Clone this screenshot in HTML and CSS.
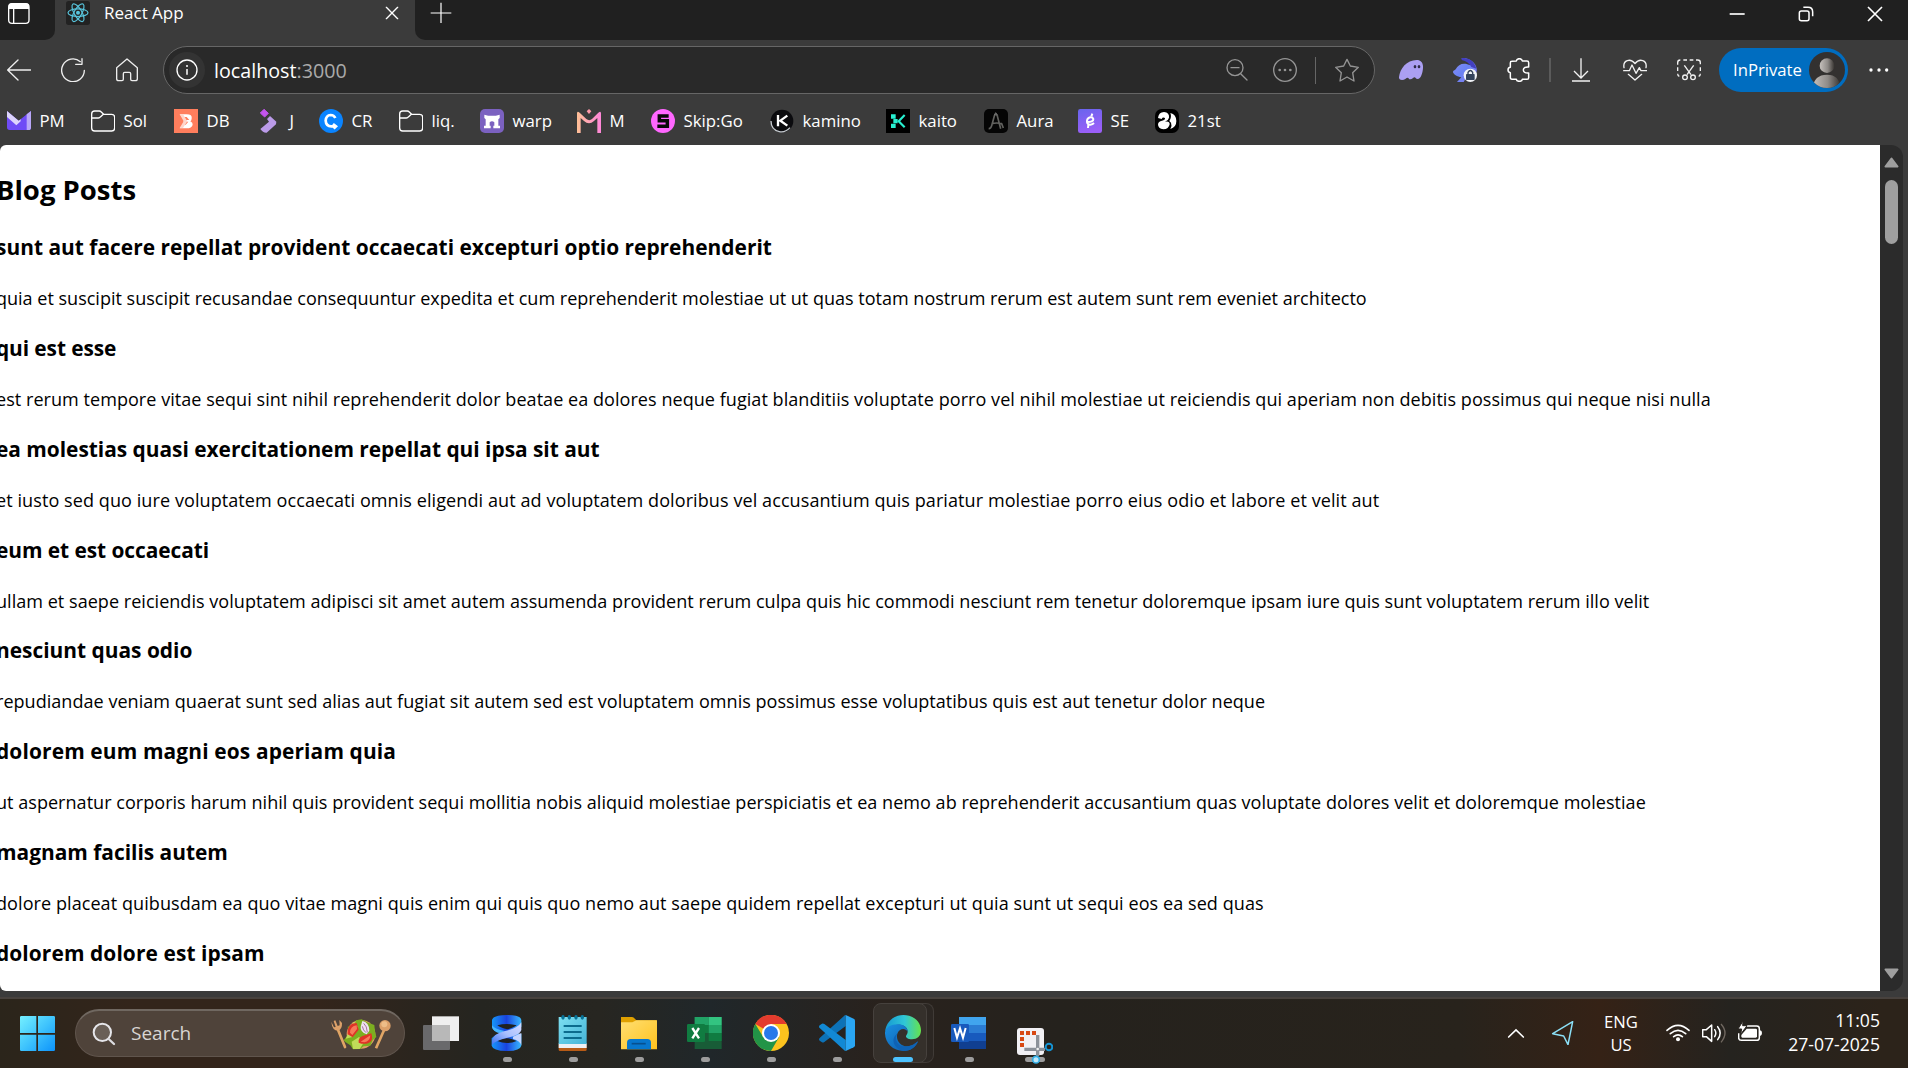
FILE: index.html
```
<!DOCTYPE html>
<html lang="en">
<head>
<meta charset="utf-8">
<title>React App</title>
<link rel="stylesheet" href="styles.css">
</head>
<body>
<header class="titlebar">
  <div class="tab-actions">
    <svg class="ic" viewBox="21 3 72 72"><rect x="26" y="11" width="61" height="59" rx="10" fill="none" stroke="#fff" stroke-width="4"/><path d="M26 27V20q0-10 10-10h41q10 0 10 10v7z" fill="#fff"/><path d="M41 27v43" stroke="#fff" stroke-width="4"/></svg>
  </div>
  <div class="tab">
    <svg class="ic" viewBox="198 3 72 72"><rect x="198" y="3" width="72" height="72" rx="8" fill="#222"/><g fill="none" stroke="#58c4dc" stroke-width="3.6"><ellipse cx="234" cy="38" rx="30" ry="11.500"/><ellipse cx="234" cy="38" rx="30" ry="11.500" transform="rotate(60 234 38)"/><ellipse cx="234" cy="38" rx="30" ry="11.500" transform="rotate(120 234 38)"/></g><circle cx="234" cy="38" r="6" fill="#58c4dc"/></svg>
    <span class="tab-title">React App</span>
    <svg class="ic" viewBox="1139 5 72 72"><path d="M1158 24l34 34M1192 24l-34 34" stroke="#fff" stroke-width="4" stroke-linecap="round"/></svg>
  </div>
  <div class="tab-rest">
    <svg class="ic new-tab" viewBox="1288 2 72 72"><path d="M1324 7v61M1293 38h62" stroke="#fff" stroke-width="3.600"/></svg>
    <svg class="ic win" viewBox="553 6 72 72"><path d="M567 42h45" stroke="#fff" stroke-width="5"/></svg>
    <svg class="ic win" viewBox="760 8 72 72"><rect x="776" y="35" width="29" height="29" rx="6" fill="none" stroke="#fff" stroke-width="4.500"/><path d="M788 24h14q14 0 14 14v13" fill="none" stroke="#fff" stroke-width="4.500"/></svg>
    <svg class="ic win" viewBox="967 8 72 72"><path d="M982 23l42 42M1024 23l-42 42" stroke="#fff" stroke-width="5"/></svg>
  </div>
</header>

<nav class="toolbar">
  <div class="cell cell-back"><svg class="ic" viewBox="21 172 72 72"><path d="M92 208H24M54 178L23 208l31 30" fill="none" stroke="#eee" stroke-width="4" stroke-linecap="round" stroke-linejoin="round"/></svg></div>
  <div class="cell"><svg class="ic" viewBox="183 173 72 72"><path d="M253 210a34 34 0 1 1-12-26M246 175v17h-19" fill="none" stroke="#eee" stroke-width="4" stroke-linecap="round" stroke-linejoin="round"/></svg></div>
  <div class="cell"><svg class="ic" viewBox="345 173 72 72"><path d="M350 202l31-26 31 26v33q0 6-6 6h-10q-4 0-4-4v-17q0-4-4-4h-14q-4 0-4 4v17q0 4-4 4h-10q-6 0-6-6z" fill="none" stroke="#eee" stroke-width="4" stroke-linejoin="round"/></svg></div>
  <div class="address">
    <span class="info"><svg class="ic" viewBox="525 174 72 72"><circle cx="561" cy="210" r="30" fill="none" stroke="#fff" stroke-width="4"/><path d="M561 207v17" stroke="#fff" stroke-width="4.500"/><circle cx="561" cy="198" r="3" fill="#fff"/></svg></span>
    <span class="url">localhost<span class="port">:3000</span></span>
    <svg class="ic a-zoom" viewBox="75 174 72 72"><g fill="none" stroke="#959595" stroke-width="4"><circle cx="105" cy="203" r="24"/><path d="M122 221l19 19M93 203h24" stroke-linecap="round"/></g></svg>
    <svg class="ic a-more" viewBox="219 174 72 72"><circle cx="255" cy="210" r="34" fill="none" stroke="#959595" stroke-width="4"/><g fill="#959595"><circle cx="239" cy="210" r="4"/><circle cx="255" cy="210" r="4"/><circle cx="271" cy="210" r="4"/></g></svg>
    <i class="divider a-div"></i>
    <svg class="ic a-star" viewBox="405 174 72 72"><path d="M441 178l10 20 24 4-17 16 4 25-21-12-21 12 4-25-17-16 24-4z" fill="none" stroke="#959595" stroke-width="4" stroke-linejoin="round"/></svg>
  </div>
  <div class="cell cell-ext"><svg class="ic" viewBox="597 174 72 72"><path d="M597 231C600 206 620 180 650 180c14 0 20 10 19 24-1 16-7 33-16 33-6 0-7-5-9-5-4 0-7 6-13 6-5 0-5-5-8-5-4 0-9 7-17 7-6 0-10-3-9-9z" fill="#ab9ff2"/><ellipse cx="645" cy="200" rx="4" ry="5" fill="#302c48"/><ellipse cx="657" cy="200" rx="4" ry="5" fill="#302c48"/></svg></div>
  <div class="cell"><svg class="ic" viewBox="759 174 72 72"><defs><linearGradient id="bunny" x1="0" y1="0" x2="1" y2="1"><stop offset="0" stop-color="#8a8ff0"/><stop offset=".5" stop-color="#6a82f5"/><stop offset="1" stop-color="#8b80ec"/></linearGradient></defs><path d="M785 174c22-1 42 13 45 32 2 16-8 26-22 28-9 1-13 4-17 12h-20l13-14c-12-2-25-10-25-16 0-4 5-5 8-8 8-17 26-21 44-12-3-11-13-15-25-18z" fill="url(#bunny)"/><path d="M785 174c22-2 40 12 44 32l-15-5c-6-12-15-17-29-21z" fill="#433fc0"/><circle cx="811" cy="226" r="20" fill="#f1f3f7"/><rect x="798" y="222" width="26" height="18" rx="2" fill="#34435b"/><path d="M804 222v-5q7-11 14 0v5" fill="none" stroke="#34435b" stroke-width="4"/></svg></div>
  <div class="cell cell-puzzle"><svg class="ic" viewBox="924 174 72 72"><path d="M938 184q-4 0-4 5v13q-7 1-7 8t7 8v14q0 6 5 6h13q1 6 9 6t9-6h14q5 0 5-5v-14q-16 1-16-9t16-9v-13q0-5-5-5h-14q-1-7-9-7t-9 7z" fill="none" stroke="#fff" stroke-width="4.500" stroke-linejoin="round"/></svg></div>
  <i class="divider"></i>
  <div class="cell cell-dl"><svg class="ic" viewBox="87 174 72 72"><path d="M123 175v58M102 213l21 21 21-21M96 243h54" fill="none" stroke="#f2f2f2" stroke-width="4"/></svg></div>
  <div class="cell"><svg class="ic" viewBox="249 174 72 72"><path d="M252 203c-4-22 19-30 33-12 14-18 37-10 33 12M251 212h17l8-17 12 25 10-17 5 9h17M265 223l20 17 20-17" fill="none" stroke="#f2f2f2" stroke-width="4" stroke-linecap="round" stroke-linejoin="round"/></svg></div>
  <div class="cell"><svg class="ic" viewBox="411 174 72 72"><path d="M418 229q-5-2-5-8M413 213v-11M413 194v-6q0-8 8-8M430 180h11M449 180h11M468 180h5q8 0 8 8v5M481 202v11M481 221q0 6-5 8" fill="none" stroke="#f2f2f2" stroke-width="4"/><path d="M433 196l20 28M461 196l-20 28" stroke="#f2f2f2" stroke-width="4"/><g fill="none" stroke="#f2f2f2" stroke-width="4"><circle cx="435" cy="232" r="7"/><circle cx="459" cy="232" r="7"/></g></svg></div>
  <div class="profile"><span>InPrivate</span>
    <svg class="avatar" viewBox="807 156 108 108"><defs><linearGradient id="person"><stop offset="0" stop-color="#c5c0bc"/><stop offset=".55" stop-color="#8f8b88"/><stop offset="1" stop-color="#383532"/></linearGradient><clipPath id="disc"><circle cx="861" cy="210" r="54"/></clipPath></defs><g clip-path="url(#disc)"><path d="M807 156h108v108H807z" fill="#333130"/><circle cx="861" cy="197" r="22" fill="url(#person)"/><path d="M818 264q4-40 43-40 38 0 40 40z" fill="url(#person)"/></g></svg>
  </div>
  <div class="cell cell-menu"><svg class="ic" viewBox="983 176 72 72"><g fill="#fff"><circle cx="995" cy="212" r="5"/><circle cx="1019" cy="212" r="5"/><circle cx="1042" cy="212" r="5"/></g></svg></div>
</nav>

<nav class="bookmarks">
  <div class="bm"><svg class="ic" viewBox="21 327 72 72"><path d="M21 333l35 29 37-29v50q0 7-8 7H29q-8 0-8-8z" fill="#6f4bf6"/><path d="M21 333l35 29 6-4v6l-13 12-28-25z" fill="#ddd4fc"/><path d="M80 343l13-10v50q0 7-8 7h-5z" fill="#b9a7f8"/></svg>PM</div>
  <div class="bm"><svg class="ic" viewBox="273 327 72 72"><path d="M275 384v-42q0-9 9-9h14q3 0 5 2l8 8h24q9 0 9 9v32q0 9-9 9h-51q-9 0-9-9zM275 354h20q4 0 7-4l8-7" fill="none" stroke="#fff" stroke-width="4"/></svg>Sol</div>
  <div class="bm"><svg class="ic" viewBox="522 327 72 72"><path d="M522 327h72v72h-72z" fill="#ff7e5d"/><path d="M539 343h20q19 0 16 13-1 6-4 8 8 4 7 10-2 11-19 11h-20l10-11h8l8-9h-15l3-5h15l-8-9h-13z" fill="#fff"/><path d="M539 343h10l13 21-13 20h-10l12-20z" fill="#ffd5ca"/></svg>DB</div>
  <div class="bm"><svg class="ic" viewBox="770 327 72 72"><path d="M791 328l13 12-11 11-13-12z" fill="#c554f0" stroke="#c554f0" stroke-width="3" stroke-linejoin="round"/><path d="M800 357l9-9 19 17-1 8-28 25q-11 1-19-11l26-22z" fill="#bb9be9"/></svg>J</div>
  <div class="bm"><svg class="ic" viewBox="957 327 72 72"><circle cx="993" cy="363" r="36" fill="#0a84ff"/><path d="M1006 354q-4-9-14-9-14 1-15 17 1 17 17 17h13M999 372l9 7-7 7" fill="none" stroke="#fff" stroke-width="8"/></svg>CR</div>
  <div class="bm"><svg class="ic" viewBox="273 327 72 72"><path d="M275 384v-42q0-9 9-9h14q3 0 5 2l8 8h24q9 0 9 9v32q0 9-9 9h-51q-9 0-9-9zM275 354h20q4 0 7-4l8-7" fill="none" stroke="#fff" stroke-width="4"/></svg>liq.</div>
  <div class="bm"><svg class="ic" viewBox="240 57 72 72"><rect x="240" y="57" width="72" height="72" rx="15" fill="#7b61c0"/><path d="M253 74q23 7 46 0v10l-4 4v19h5v8h-20v-8h3V97q-7-6-14 0v10h3v8h-20v-8h5V88l-4-4z" fill="#fff"/></svg>warp</div>
  <div class="bm"><svg class="ic" viewBox="531 57 72 72"><defs><linearGradient id="em"><stop offset="0" stop-color="#ffc095"/><stop offset="1" stop-color="#ff86da"/></linearGradient></defs><path d="M531 129V70q0-8 8-2l20 19q9 7 17 0l19-19q8-6 8 2v59h-11V84l-10 9q-15 14-30 0l-10-9v45z" fill="url(#em)"/><path d="M567 57l7 7-7 8-7-8z" fill="#ff9aa9"/></svg>M</div>
  <div class="bm"><svg class="ic" viewBox="753 57 72 72"><circle cx="789" cy="93" r="36" fill="#ff67ff"/><path d="M806 78h-28v14h24v17h-30" fill="none" stroke="#090909" stroke-width="10.500"/></svg>Skip:Go</div>
  <div class="bm"><svg class="ic" viewBox="1108 57 72 72"><circle cx="1144" cy="93" r="34" fill="#0b0b0e"/><path d="M1111 93q0 26 25 32 17 4 32-12" fill="none" stroke="#c6cbd0" stroke-width="4"/><path d="M1132 75v34M1160 77l-21 15 21 15" fill="none" stroke="#fff" stroke-width="7"/></svg>kamino</div>
  <div class="bm"><svg class="ic" viewBox="138 57 72 72"><path d="M138 57h72v72h-72z" fill="#000"/><path d="M153 73h14v13h-14zM153 101h14v13h-14zM160 87h13v13h-13z" fill="#27efd0"/><path d="M194 75l-18 18.500 18 18.500" fill="none" stroke="#27efd0" stroke-width="6.500"/></svg>kaito</div>
  <div class="bm"><svg class="ic" viewBox="432 57 72 72"><rect x="432" y="57" width="72" height="72" rx="15" fill="#050505"/><path d="M446 116q7 0 9-9l8-29q4-10 9 0l10 38M456 101q13-4 29 0l5 13" fill="none" stroke="#62625f" stroke-width="5"/><path d="M463 76l4-8 6 8" stroke="#777" stroke-width="3" fill="none"/></svg>Aura</div>
  <div class="bm"><svg class="ic" viewBox="714 57 72 72"><defs><linearGradient id="se" x2=".3" y2="1"><stop offset="0" stop-color="#6865ed"/><stop offset="1" stop-color="#9a5ff8"/></linearGradient></defs><rect x="714" y="57" width="72" height="72" rx="7" fill="url(#se)"/><path d="M739 96q22 1 21-9-2-6-9-5-11 3-10 14 2 9 10 8 7-1 11-5" fill="none" stroke="#fff" stroke-width="6"/><path d="M754 79l3-8M745 105l-1 9" stroke="#fff" stroke-width="6"/></svg>SE</div>
  <div class="bm"><svg class="ic" viewBox="945 57 72 72"><rect x="945" y="57" width="72" height="72" rx="20" fill="#000"/><path d="M954 84q2-18 18-18 17 2 15 17-2 9-12 12 14-3 14 8-3 15-19 15-16-1-16-15 1-9 12-11 10-2 9-8-7-4-10 3z" fill="#fff"/><path d="M991 69q18 5 18 24t-18 24q6-10 2-19l-5-5q8-12 3-24z" fill="#fff"/></svg>21st</div>
</nav>

<div class="viewport">
  <main class="page">
    <h1>Blog Posts</h1>
    <h3>sunt aut facere repellat provident occaecati excepturi optio reprehenderit</h3>
    <p>quia et suscipit suscipit recusandae consequuntur expedita et cum reprehenderit molestiae ut ut quas totam nostrum rerum est autem sunt rem eveniet architecto</p>
    <h3>qui est esse</h3>
    <p>est rerum tempore vitae sequi sint nihil reprehenderit dolor beatae ea dolores neque fugiat blanditiis voluptate porro vel nihil molestiae ut reiciendis qui aperiam non debitis possimus qui neque nisi nulla</p>
    <h3>ea molestias quasi exercitationem repellat qui ipsa sit aut</h3>
    <p>et iusto sed quo iure voluptatem occaecati omnis eligendi aut ad voluptatem doloribus vel accusantium quis pariatur molestiae porro eius odio et labore et velit aut</p>
    <h3>eum et est occaecati</h3>
    <p>ullam et saepe reiciendis voluptatem adipisci sit amet autem assumenda provident rerum culpa quis hic commodi nesciunt rem tenetur doloremque ipsam iure quis sunt voluptatem rerum illo velit</p>
    <h3>nesciunt quas odio</h3>
    <p>repudiandae veniam quaerat sunt sed alias aut fugiat sit autem sed est voluptatem omnis possimus esse voluptatibus quis est aut tenetur dolor neque</p>
    <h3>dolorem eum magni eos aperiam quia</h3>
    <p>ut aspernatur corporis harum nihil quis provident sequi mollitia nobis aliquid molestiae perspiciatis et ea nemo ab reprehenderit accusantium quas voluptate dolores velit et doloremque molestiae</p>
    <h3>magnam facilis autem</h3>
    <p>dolore placeat quibusdam ea quo vitae magni quis enim qui quis quo nemo aut saepe quidem repellat excepturi ut quia sunt ut sequi eos ea sed quas</p>
    <h3>dolorem dolore est ipsam</h3>
  </main>
  <div class="scrollbar">
    <svg class="arrow" viewBox="0 0 15 11"><path d="M7.500 1.500L13.500 9.500h-12z" fill="#9f9f9f" stroke="#9f9f9f" stroke-width="2" stroke-linejoin="round"/></svg>
    <i class="thumb"></i>
    <svg class="arrow arrow-down" viewBox="0 0 15 11"><path d="M7.500 9.500L13.500 1.500h-12z" fill="#9f9f9f" stroke="#9f9f9f" stroke-width="2" stroke-linejoin="round"/></svg>
  </div>
</div>

<footer class="taskbar">
  <svg class="start" viewBox="60 108 105 105"><defs><linearGradient id="win" gradientUnits="userSpaceOnUse" x1="60" y1="108" x2="165" y2="213"><stop offset="0" stop-color="#75f0ff"/><stop offset=".5" stop-color="#3fc4fd"/><stop offset="1" stop-color="#0d93fb"/></linearGradient></defs><path d="M64 108h45v51H60v-47q0-4 4-4zM114 108h47q4 0 4 4v47h-51zM60 164h49v49H64q-4 0-4-4zM114 164h51v45q0 4-4 4h-47z" fill="url(#win)"/></svg>
  <div class="search">
    <svg class="mag" viewBox="276 123 72 72"><circle cx="307" cy="154" r="26" fill="#fff" fill-opacity=".15" stroke="#e6e6ea" stroke-width="6"/><path d="M326 174l16 15" stroke="#dcdce0" stroke-width="7" stroke-linecap="round"/></svg>
    <span>Search</span>
    <svg class="salad" viewBox="993 113 186 96"><path d="M1016 146l22 54" stroke="#e0a565" stroke-width="8" stroke-linecap="round"/><path d="M997 124q2 27 21 27 12-6 11-23l-8-9 1 16-6 2-7-17-5 2 6 18-5 1z" fill="#dca069"/><path d="M1155 150l-24 54" stroke="#e0a565" stroke-width="8"/><ellipse cx="1158" cy="136" rx="17" ry="17" fill="#dca069"/><circle cx="1156" cy="132" r="9" fill="#edbd88"/><circle cx="1086" cy="162" r="43" fill="#e4a066"/><path d="M1034 180l16-20-4-21 20-4 5-15 17-3 16 9 22 8 2 20 4 16-11 10-7 16-20 2-10 8-22 1-8-12-14-9z" fill="#7cae20"/><path d="M1064 124l14 16-18 30-20 5zM1058 184l22-14 16 14-14 22h-20z" fill="#c0dc59"/><path d="M1046 162q-2-33 27-34l6 20-18 23zM1079 187q-2-15 12-20l26-8q8 23-10 30-14 4-28-2z" fill="#df3327"/><path d="M1053 157q1-20 20-22l1 11-14 18zM1085 184l29-19q-1 18-18 21z" fill="#f77a5a"/><path d="M1090 122q20 3 21 29l-8 11q-20-7-18-23z" fill="#efe3f0"/><path d="M1094 129q10 8 11 27M1090 138q2 12 11 19" stroke="#aa709f" stroke-width="3" fill="none"/></svg>
  </div>
  <svg class="taskview" viewBox="1269 108 108 102"><path d="M1296 109h81v74h-81z" fill="#efefef"/><rect x="1269" y="135" width="81" height="75" rx="3" fill="#69696b"/><path d="M1296 135h54v48h-54z" fill="#b8b8b8"/></svg>
  <div class="apps">
    <div class="app"><svg viewBox="88 105 108 108"><defs><linearGradient id="az"><stop offset="0" stop-color="#1698fa"/><stop offset=".5" stop-color="#1a43dd"/><stop offset="1" stop-color="#39baff"/></linearGradient><linearGradient id="bz" x1="0" y1="1" x2="1" y2="0"><stop offset="0" stop-color="#3c72f2"/><stop offset=".5" stop-color="#a9c0ff"/><stop offset="1" stop-color="#d6dcff"/></linearGradient></defs><path d="M97 120q4-15 45-15t43 15v20q-8 14-22 19l22 3v35q-4 16-44 16-42-1-45-16v-22q10-12 26-17-22-4-25-18z" fill="url(#az)"/><path d="M113 136q29-8 58 0-8 7-28 12-20-4-30-12zM113 183q24-17 58 0-29 12-58 0z" fill="#20211f"/><path d="M97 136q10 13 37 17l-12 7q-22-4-25-18z" fill="#45b5ff"/><path d="M97 181q3-18 36-27 42-9 52-27v23q-4 16-36 22-44 9-52 24z" fill="url(#bz)"/><path d="M160 170l25-11v37q-4-14-25-19z" fill="#c5d4ff"/></svg><i></i></div>
    <div class="app"><svg viewBox="286 105 108 108"><defs><linearGradient id="np" x2="1" y2="1"><stop offset="0" stop-color="#7ddff0"/><stop offset="1" stop-color="#45b4d8"/></linearGradient></defs><rect x="297" y="190" width="84" height="23" rx="4" fill="#b75b16"/><path d="M297 190h84v14h-84z" fill="#edf0f5"/><path d="M297 111h84v81h-84z" fill="url(#np)"/><path d="M312 138h54M312 156h54M312 174h54" stroke="#0b6b8d" stroke-width="6"/><g fill="#087398"><ellipse cx="310" cy="112" rx="5" ry="7"/><ellipse cx="329" cy="112" rx="5" ry="7"/><ellipse cx="349" cy="112" rx="5" ry="7"/><ellipse cx="368" cy="112" rx="5" ry="7"/></g></svg><i></i></div>
    <div class="app"><svg viewBox="484 105 108 108"><defs><linearGradient id="fo" x2="1" y2="1"><stop offset="0" stop-color="#ffdf72"/><stop offset="1" stop-color="#ffc21d"/></linearGradient></defs><path d="M484 111h32q5 0 8 4l6 6h58q4 0 4 5v30H484z" fill="#dfa000"/><path d="M484 127h34l12-6h62v87H484z" fill="url(#fo)"/><path d="M502 208v-20q0-11 11-11h50q11 0 11 11v20z" fill="#0877cd"/><path d="M516 191h42" stroke="#07508f" stroke-width="5"/></svg><i></i></div>
    <div class="app"><svg viewBox="682 105 108 108"><path d="M705 111h81v96h-81z" fill="#185c37"/><path d="M705 111h42v24h-42z" fill="#21a366"/><path d="M747 111h39v24h-39z" fill="#33c481"/><path d="M705 135h42v24h-42z" fill="#107c41"/><path d="M747 135h39v24h-39z" fill="#21a366"/><path d="M747 159h39v24h-39z" fill="#107c41"/><rect x="682" y="132" width="54" height="54" rx="4" fill="#107c41"/><path d="M698 144l20 31M718 144l-20 31" stroke="#fff" stroke-width="7"/></svg><i></i></div>
    <div class="app"><svg viewBox="0 0 108 108"><circle cx="54" cy="54" r="54" fill="#fcc31e"/><path d="M54 54L7 27A54 54 0 0 1 101 27H54z" fill="#e33b2e"/><path d="M7 27A54 54 0 0 0 54 108L78 67 54 54 31 67z" fill="#229447"/><circle cx="54" cy="54" r="27" fill="#fff"/><circle cx="54" cy="54" r="21" fill="#2879ea"/></svg><i></i></div>
    <div class="app"><svg viewBox="177 105 108 108"><path d="M179 174q-4 4 0 8l7 5q3 2 7-1l64-48v-33q-3 0-5 3z" fill="#0d72b7"/><path d="M179 144q-4-4 0-8l7-5q3-2 7 1l64 48v33q-3 0-5-3z" fill="#1289d4"/><path d="M257 105l24 11q4 2 4 6v74q0 4-4 6l-24 11z" fill="#2aa6f3"/></svg><i></i></div>
    <div class="app app-active"><svg viewBox="375 105 108 108"><defs><linearGradient id="e1"><stop offset="0" stop-color="#1698d3"/><stop offset=".55" stop-color="#30c7d6"/><stop offset="1" stop-color="#66e34b"/></linearGradient><linearGradient id="e2" x2="1" y2="1"><stop offset="0" stop-color="#198fe0"/><stop offset="1" stop-color="#0c57a8"/></linearGradient></defs><path d="M375 156C378 126 401 105 430 105c31 0 53 21 53 46 0 18-12 27-27 27-14 0-19-6-18-10 2-4 5-6 5-14 0-12-12-20-29-20-18 0-34 10-39 22z" fill="url(#e1)"/><path d="M375 157c3-16 18-24 38-24 17 0 29 8 30 22-8-14-27-8-31 6-6 22 12 39 30 38 15 0 24-9 32-15-7 18-22 29-43 29-34 0-57-25-56-56z" fill="url(#e2)"/><path d="M412 160c-12 24 6 44 30 39 15-1 24-9 32-15-7 18-22 29-43 29-24-5-44-31-19-53z" fill="#0e62b5"/></svg><i></i></div>
    <div class="app"><svg viewBox="573 105 108 108"><path d="M597 111h81v96h-81z" fill="#103f91"/><path d="M597 111h81v24h-81z" fill="#41a5ee"/><path d="M597 135h81v24h-81z" fill="#2b7cd3"/><path d="M597 159h81v24h-81z" fill="#185abd"/><rect x="573" y="132" width="54" height="54" rx="4" fill="#185abd"/><path d="M583 144l8 29 9-28 9 28 8-29" fill="none" stroke="#fff" stroke-width="6"/></svg><i></i></div>
    <div class="app app-snip"><i></i><svg viewBox="771 141 108 111"><rect x="771" y="144" width="81" height="81" rx="9" fill="#f1f0f4"/><path d="M780 153h12v12h-12zM798 153h12v12h-12zM816 153h12v12h-12zM780 171h12v12h-12zM780 189h12v12h-12z" fill="#d84813"/><path d="M833 165v64M793 208h62" stroke="#8c9199" stroke-width="10"/><circle cx="833" cy="207" r="4" fill="#eee"/><circle cx="867" cy="201" r="10" fill="none" stroke="#1593d3" stroke-width="6"/><circle cx="828" cy="239" r="10" fill="#bde7fa" stroke="#33aee5" stroke-width="5"/></svg></div>
  </div>
  <div class="tray">
    <svg class="ic chev" viewBox="132 242 72 72"><path d="M146 290l22-21 22 21" fill="none" stroke="#fff" stroke-width="5" stroke-linecap="round"/></svg>
    <svg class="ic loc" viewBox="273 243 72 72"><path d="M338 245l-60 36 33 7 13 26z" fill="none" stroke="#8ce0f7" stroke-width="4.500" stroke-linejoin="round"/></svg>
    <div class="lang">ENG<br>US</div>
    <svg class="ic wifi" viewBox="618 242 72 72"><g fill="none" stroke="#fff" stroke-width="5" stroke-linecap="round"><path d="M621 270q33-30 66 0M631 280q23-20 46 0M641 289q13-11 26 0"/></g><circle cx="654" cy="297" r="6" fill="#fff"/></svg>
    <svg class="ic vol" viewBox="726 243 72 72"><path d="M728 269v21h11l16 14v-49l-16 14z" fill="none" stroke="#fff" stroke-width="4.500" stroke-linejoin="round"/><path d="M764 269q7 10 0 21M773 260q15 19 0 39" fill="none" stroke="#fff" stroke-width="4.500" stroke-linecap="round"/><path d="M783 252q24 27 0 55" fill="none" stroke="#716961" stroke-width="4"/></svg>
    <svg class="ic bat" viewBox="834 242 72 72"><path d="M860 257h30q8 0 8 8v27q0 8-8 8h-46q-8 0-8-8v-13" fill="none" stroke="#fff" stroke-width="4.500"/><path d="M860 265h27q4 0 4 4v19q0 4-4 4h-40q-3 0-3-4v-4z" fill="#fff"/><path d="M900 270q6 1 6 8t-6 9z" fill="#fff"/><path d="M849 242l-15 24h11l-3 16 19-26h-13z" fill="#fff" stroke="#27231f" stroke-width="3"/></svg>
    <div class="clock">11:05<br>27-07-2025</div>
  </div>
</footer>
</body>
</html>
```
FILE: styles.css
```
* { box-sizing: border-box; }
body {
  margin: 0;
  width: 1908px;
  height: 1068px;
  overflow: hidden;
  background: #3b3b3b;
  color: #fff;
  font-family: "Open Sans", "Noto Sans", sans-serif;
  display: flex;
  flex-direction: column;
}
svg { display: block; flex: none; }
.ic { width: 24px; height: 24px; }

/* Title bar */
.titlebar { height: 40px; display: flex; flex: none; background: #3b3b3b; }
.tab-actions { width: 55px; background: #202020; border-bottom-right-radius: 10px; padding: 1px 0 0 7px; }
.tab { width: 360px; display: flex; padding: 1px 0 0 11px; }
.tab-title { width: 303px; padding-left: 14px; flex: 1; font-size: 17px; line-height: 24px; }
.tab > svg:last-child { margin-right: 11px; }
.tab-rest { flex: 1; display: flex; background: #202020; border-bottom-left-radius: 10px; padding: 1px 21px 0 14px; }
.new-tab { margin-right: auto; }
.win { margin: 1px 0 0 45px; }

/* Toolbar */
.toolbar { height: 60px; flex: none; display: flex; align-items: center; }
.cell { width: 54px; display: flex; justify-content: center; flex: none; }
.cell-back { width: 46px; padding-right: 8px; }
.cell-ext { margin-left: 9px; }
.cell-puzzle { width: 57px; padding-right: 3px; }
.cell-dl { margin-left: 3px; }
.cell-menu { margin-left: 4px; }
.address {
  width: 1212px;
  height: 48px;
  margin-left: 9px;
  flex: none;
  display: flex;
  align-items: center;
  background: #292929;
  border: 1px solid #666;
  border-radius: 24px;
  padding-left: 5px;
}
.info { width: 36px; height: 36px; border-radius: 50%; background: #333; display: flex; align-items: center; justify-content: center; }
.url { margin: 1px auto 0 9px; font-size: 19.7px; line-height: 28px; }
.port { color: #aaa; }
.divider { width: 2px; height: 24px; background: #5b5b5b; flex: none; }
.a-more { margin-left: 24px; }
.a-div { width: 1px; height: 27px; margin: 0 19px 0 18px; background: #666; }
.a-star { margin-right: 15px; }
.profile {
  width: 129px;
  height: 44px;
  margin-left: 3px;
  flex: none;
  display: flex;
  align-items: center;
  justify-content: space-between;
  border-radius: 22px;
  background: #006dc0;
  padding: 0 3px 0 14px;
  font-size: 16.7px;
}
.profile span { margin-top: -1px; }
.avatar { width: 36px; height: 36px; }

/* Bookmarks */
.bookmarks {
  height: 45px;
  flex: none;
  display: grid;
  grid-template-columns: 84px 83px 83px 62px 80px 81px 97px 74px 119px 116px 98px 94px 77px 80px;
  padding: 9px 0 0 7px;
}
.bm { display: flex; gap: 8.5px; font-size: 16.8px; line-height: 24px; white-space: nowrap; }

/* Web page */
.viewport { height: 846px; flex: none; display: flex; }
.page { width: 1880px; overflow: hidden; background: #fff; color: #000; border-radius: 6px 0 0 6px; padding: 27.3px 0 0; }
.page > * { margin: 0 0 21.9px -4px; white-space: nowrap; }
.page h1 { font-size: 27.5px; line-height: 36px; margin-bottom: 24px; }
.page h3 { font-size: 20.9px; line-height: 31px; }
.page p { font-size: 18.05px; line-height: 26px; }
.page h3:nth-of-type(1) { letter-spacing: .016px; }
.page h3:nth-of-type(2) { letter-spacing: -.1px; }
.page h3:nth-of-type(3) { letter-spacing: -.02px; }
.page h3:nth-of-type(4) { letter-spacing: -.06px; }
.page h3:nth-of-type(6) { letter-spacing: .14px; }
.page h3:nth-of-type(8) { letter-spacing: .1px; }
.page p:nth-of-type(1) { letter-spacing: -.008px; }
.page p:nth-of-type(2) { letter-spacing: .041px; }
.page p:nth-of-type(3) { letter-spacing: .075px; }
.page p:nth-of-type(n+4) { letter-spacing: .026px; }
.page p:nth-of-type(7) { letter-spacing: .066px; }
.scrollbar { width: 23px; background: #2b2b2b; border-radius: 0 12px 12px 0; display: flex; flex-direction: column; align-items: center; padding: 12px 0 12px; }
.arrow { width: 15px; height: 11px; }
.thumb { width: 13px; height: 64px; margin-top: 12px; border-radius: 7px; background: #9f9f9f; }
.arrow-down { margin-top: auto; }

/* Taskbar */
.taskbar {
  height: 71px;
  margin-top: 6px;
  flex: none;
  display: flex;
  align-items: flex-start;
  border-top: 2px solid #48423e;
  background: linear-gradient(90deg, #2b251b 0, #33251b 130px, #33251b 320px, #252520 480px, #272621 600px, #20272a 710px, #29221d 880px, #25221d 1060px, #28231c 1460px, #352216 1600px, #25231f 1730px, #2c231a 1880px);
}
.start { width: 35px; height: 35px; margin: 17px 0 0 20px; }
.search {
  width: 330px;
  height: 48px;
  margin: 10px 0 0 20px;
  display: flex;
  align-items: center;
  flex: none;
  border: 1px solid #60554d;
  border-top: 2px solid #706861;
  border-radius: 24px;
  background: #4f433a;
  color: #d8d5d2;
  font-size: 19px;
  padding: 0 12px 0 16px;
}
.search span { margin-top: -2px; }
.mag { width: 24px; height: 24px; margin-right: 15px; }
.salad { width: 62px; height: 32px; margin-left: auto; }
.taskview { width: 36px; height: 34px; margin: 17px 0 0 18px; }
.apps { display: flex; margin-left: 15px; }
.app { width: 66px; height: 60px; margin-top: 4px; display: flex; flex-direction: column; align-items: center; padding-top: 12px; position: relative; }
.app svg { width: 36px; height: 36px; }
.app i { width: 9px; height: 5px; margin-top: 6px; border-radius: 3px; background: #9d9d9d; }
.app-active { width: 54px; margin-left: 3px; margin-right: 9px; padding: 11px 0 0 6px; border: 1px solid #46413d; border-radius: 8px; background: #35302b; box-shadow: 7px 0 0 -1px #2c2723, 7px 0 0 0 #403b37; }
.app-active i { width: 20px; background: #4cc2ff; }
.app-snip i { width: 20px; margin-top: 42px; }
.app-snip svg { width: 36px; height: 37px; position: absolute; left: 15px; top: 24px; }
.tray { margin-left: auto; height: 69px; padding-right: 28px; display: flex; align-items: flex-start; }
.chev { margin-top: 22px; }
.loc { margin: 22px 0 0 23px; }
.lang { width: 50px; margin: 11px 0 0 21px; text-align: center; font-size: 16.6px; line-height: 23px; }
.wifi { margin: 22px 0 0 20px; }
.vol { margin: 22px 0 0 12px; }
.bat { margin: 22px 0 0 12px; }
.clock { width: 118px; margin: 9px 0 0; text-align: right; font-size: 17.6px; line-height: 24px; }
```
